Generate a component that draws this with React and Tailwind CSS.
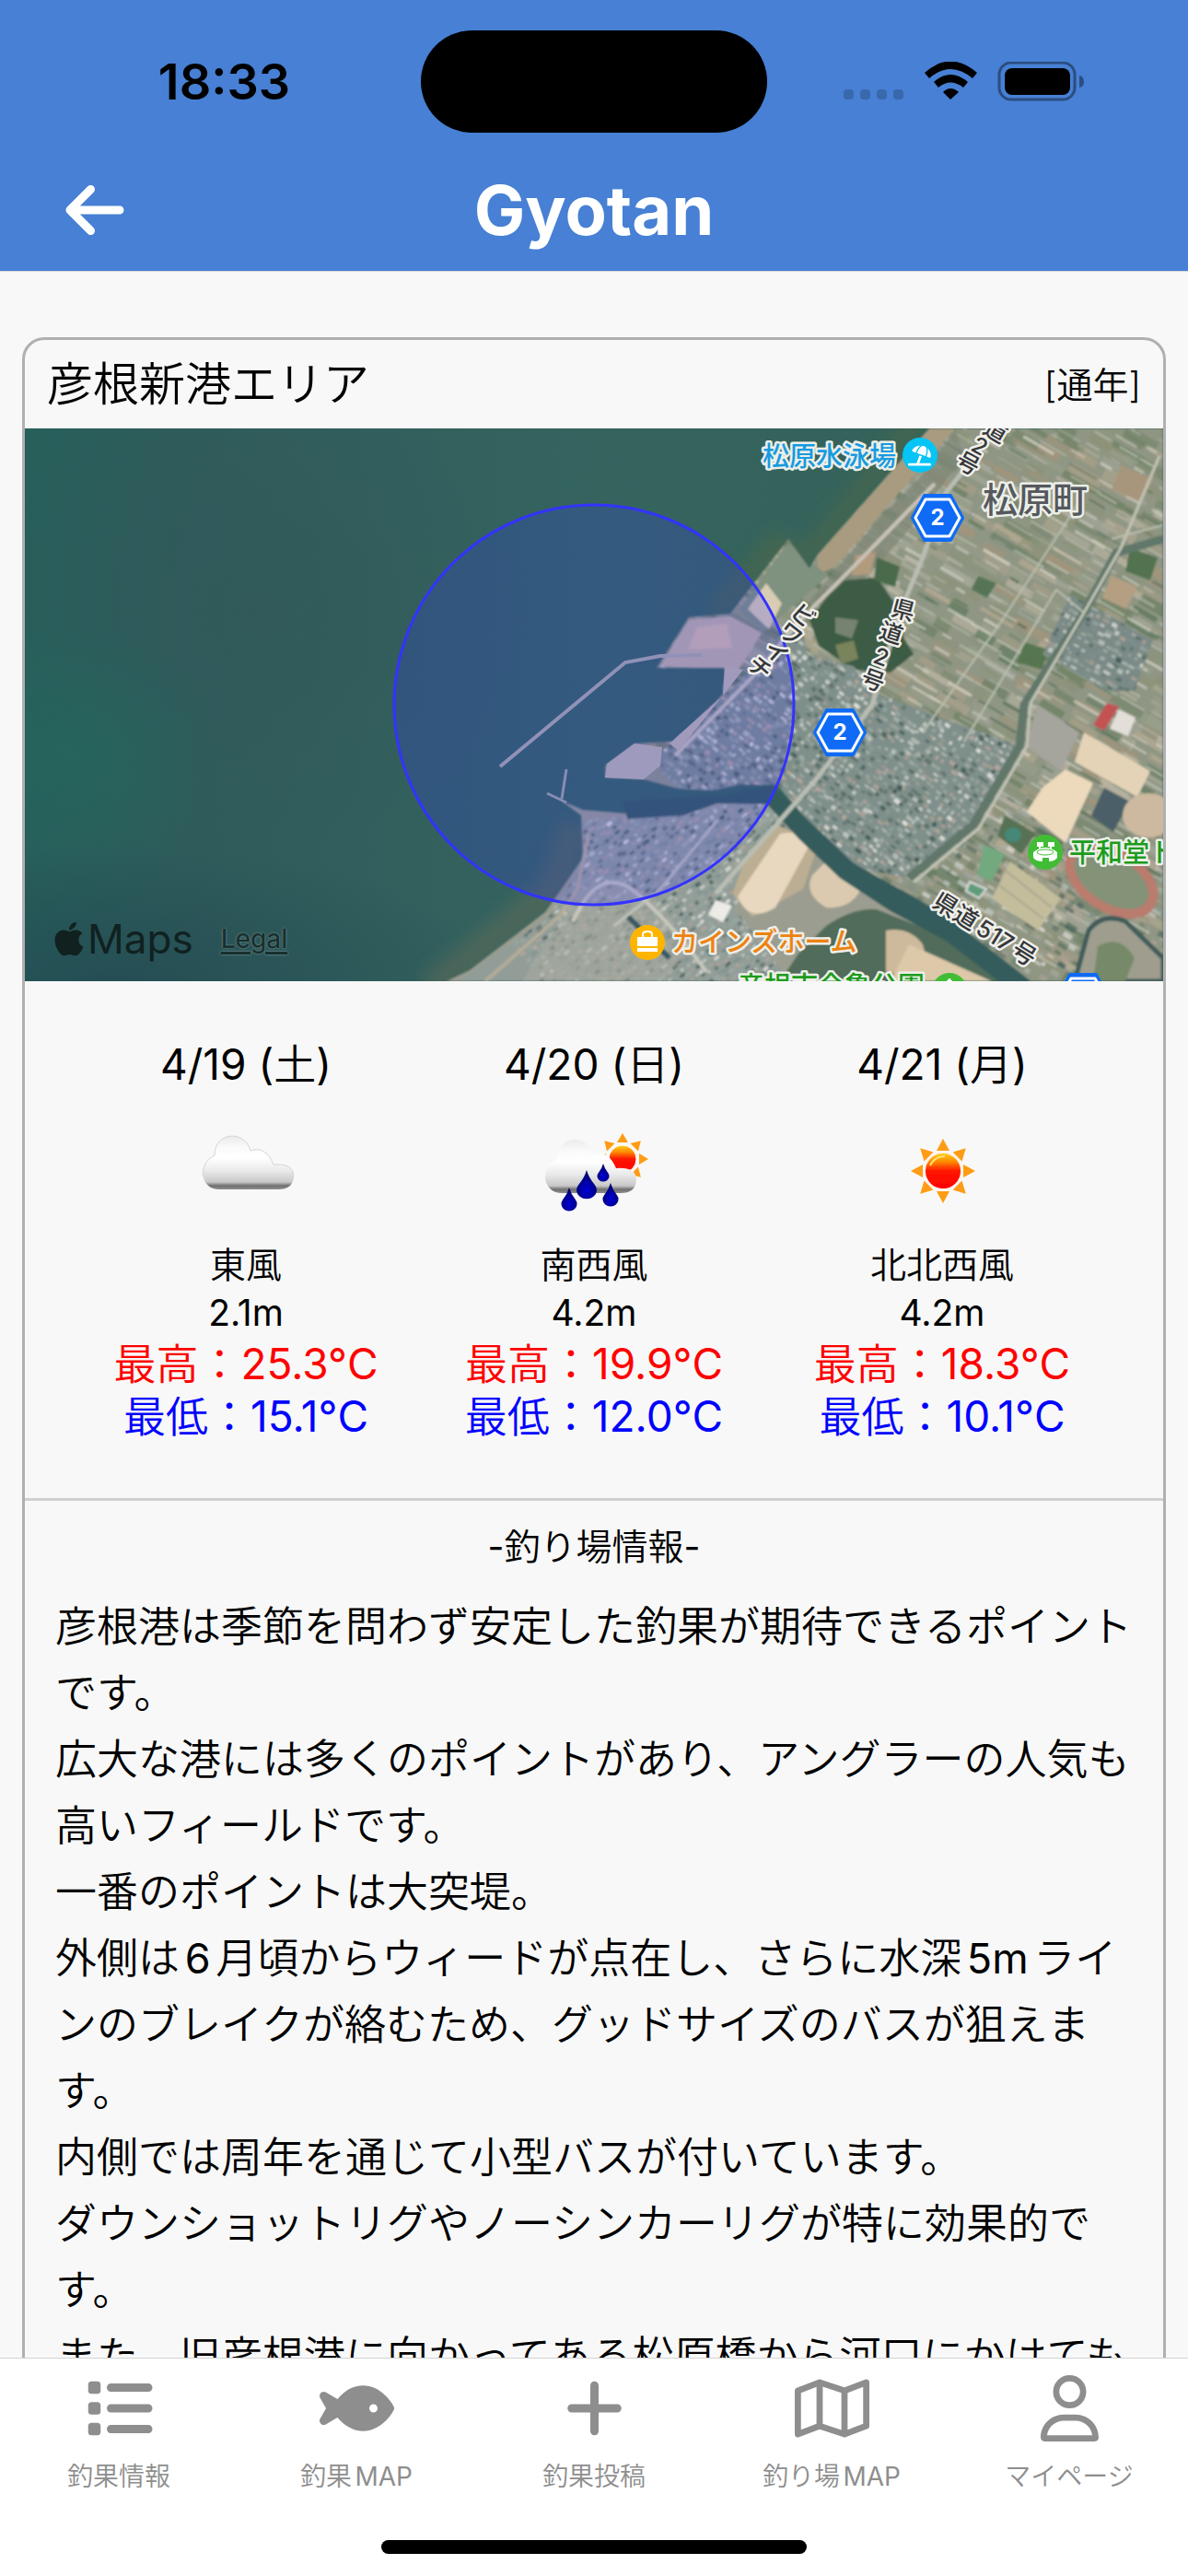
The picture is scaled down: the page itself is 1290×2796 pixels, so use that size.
import React from "react";
import { FaArrowLeft, FaList, FaFish, FaPlus, FaRegMap, FaRegUser, FaApple, FaUmbrellaBeach, FaTree } from "react-icons/fa6";

/* ---------- small deterministic generator for the aerial texture ---------- */
function rng(seed) {
  let s = seed;
  return () => {
    s = (s * 1664525 + 1013904223) % 4294967296;
    return s / 4294967296;
  };
}

function makeTiles({ seed, x, y, w, h, stepX, stepY, minW, maxW, minH, maxH, colors, opacity }) {
  const r = rng(seed);
  const out = [];
  for (let b = y; b < y + h; b += stepY) {
    for (let a = x; a < x + w; a += stepX) {
      out.push({
        x: Math.round(a + r() * stepX * 0.5),
        y: Math.round(b + r() * stepY * 0.5),
        w: Math.round(minW + r() * (maxW - minW)),
        h: Math.round(minH + r() * (maxH - minH)),
        c: colors[Math.floor(r() * colors.length)],
        o: opacity * (0.5 + r() * 0.5),
      });
    }
  }
  return out;
}

const FIELDS = makeTiles({
  seed: 7, x: 700, y: -500, w: 900, h: 920, stepX: 34, stepY: 11, minW: 16, maxW: 46, minH: 4, maxH: 12,
  colors: ["#a89f87", "#8d9277", "#6d8062", "#b8ab93", "#9aa08b", "#5e785c", "#c0b8a5", "#8a9279", "#a4947a", "#a9ac9e"], opacity: 0.8,
});
const FIELD_LINES = makeTiles({
  seed: 19, x: 700, y: -500, w: 900, h: 920, stepX: 34, stepY: 13, minW: 10, maxW: 38, minH: 1, maxH: 3,
  colors: ["#dcdccf", "#c9cdbf", "#e4dfd2", "#4d6853", "#d0d2c8"], opacity: 0.75,
});
const TOWN_COLORS = ["#c7cdc8", "#52655f", "#9aa8a3", "#e2e1da", "#7d918f", "#3f5a54", "#a9b1a8", "#b8a79c"];
const NORTH_BLOCKS = makeTiles({
  seed: 31, x: 630, y: 130, w: 480, h: 420, stepX: 7, stepY: 7, minW: 3, maxW: 7, minH: 2, maxH: 5, colors: TOWN_COLORS, opacity: 1,
});
const SOUTH_BLOCKS = makeTiles({
  seed: 43, x: 520, y: 340, w: 340, h: 320, stepX: 7, stepY: 7, minW: 3, maxW: 7, minH: 2, maxH: 4, colors: TOWN_COLORS, opacity: 1,
});
const EAST_BLOCKS = makeTiles({
  seed: 57, x: 1080, y: 130, w: 200, h: 200, stepX: 8, stepY: 8, minW: 3, maxW: 8, minH: 2, maxH: 5, colors: TOWN_COLORS, opacity: 0.9,
});
const SUBURB = makeTiles({
  seed: 71, x: 800, y: 400, w: 460, h: 240, stepX: 14, stepY: 11, minW: 4, maxW: 13, minH: 3, maxH: 7, colors: [...TOWN_COLORS, "#55705a", "#6c8268"], opacity: 0.75,
});

function Tiles({ data }) {
  return data.map((t, i) => <rect key={i} x={t.x} y={t.y} width={t.w} height={t.h} fill={t.c} opacity={t.o} />);
}

const NORTH_LAND =
  "M982 0 L860 138 L852 152 L829 120 L766 201 L721 205 L686 260 L760 260 L758 289 L705 340 L662 342 L630 366 L630 379 L672 381 L709 391 L745 393 L776 387 L817 387 L850 425 L905 478 L960 505 L1010 535 L1085 600 L1236 600 L1236 0 Z";
const SOUTH_LAND =
  "M458 600 L483 588 L565 525 L582 501 L606 466 L604 420 L582 404 L606 414 L654 418 L715 414 L752 399 L809 399 L842 440 L890 488 L945 522 L1000 552 L1060 600 Z";
const NORTH_TOWN =
  "M758 290 L790 262 L840 200 L850 245 L900 258 L930 290 L1080 345 L1030 430 L960 488 L905 478 L850 425 L817 387 L776 387 L745 393 L709 391 L690 372 L690 352 Z";
const SOUTH_TOWN = "M606 425 L715 416 L809 400 L830 440 L770 520 L830 600 L470 600 L570 528 L608 470 Z";
const EAST_TOWN = "M1135 180 L1225 230 L1205 285 L1175 285 L1105 245 Z";

function Hexagon({ cx, cy }) {
  return (
    <g transform={`translate(${cx} ${cy})`}>
      <path d="M-14 -24 H14 L27 0 L14 24 H-14 L-27 0 Z" fill="#0f6bf6" stroke="#0f6bf6" strokeWidth="4" strokeLinejoin="round" />
      <path d="M-13 -20 H13 L24 0 L13 20 H-13 L-24 0 Z" fill="#0f6bf6" stroke="#fff" strokeWidth="3" strokeLinejoin="round" />
      <text y="8" textAnchor="middle" fontSize="24" fontWeight="700" fill="#fff">2</text>
    </g>
  );
}

function RoadChars({ chars, size = 25 }) {
  return chars.map(([c, x, y, r]) => (
    <text key={c + x} transform={`translate(${x} ${y}) rotate(${r})`} y={size * 0.36} textAnchor="middle" fontSize={size} fontWeight="500" fill="#35383a" stroke="#f1f0ec" strokeWidth="5" strokeLinejoin="round" paintOrder="stroke">
      {c}
    </text>
  ));
}

function Label({ x, y, size, fill, weight = 500, children }) {
  return (
    <text x={x} y={y} fontSize={size} fontWeight={weight} fill={fill} stroke="#ecefe9" strokeWidth="5" strokeLinejoin="round" paintOrder="stroke">
      {children}
    </text>
  );
}

function AerialMap() {
  return (
    <svg viewBox="0 0 1236 600" preserveAspectRatio="xMidYMid slice" className="block h-full w-full font-['Inter','Noto_Sans_CJK_JP',sans-serif]" role="img" aria-label="彦根新港エリアの地図">
      <defs>
        <linearGradient id="sea" x1="0" y1="0" x2="1" y2="0">
          <stop offset="0" stopColor="#275f5b" />
          <stop offset="0.15" stopColor="#2f5c5b" />
          <stop offset="0.5" stopColor="#35645f" />
          <stop offset="0.85" stopColor="#356259" />
        </linearGradient>
        <radialGradient id="deep">
          <stop offset="0" stopColor="#234a52" stopOpacity="0.8" />
          <stop offset="1" stopColor="#234a52" stopOpacity="0" />
        </radialGradient>
        <radialGradient id="teal">
          <stop offset="0" stopColor="#23685f" stopOpacity="0.6" />
          <stop offset="1" stopColor="#23685f" stopOpacity="0" />
        </radialGradient>
        <radialGradient id="slate">
          <stop offset="0" stopColor="#32575a" stopOpacity="0.6" />
          <stop offset="1" stopColor="#32575a" stopOpacity="0" />
        </radialGradient>
        <clipPath id="north"><path d={NORTH_LAND} /></clipPath>
        <clipPath id="northTown"><path d={NORTH_TOWN} /></clipPath>
        <clipPath id="southTown"><path d={SOUTH_TOWN} /></clipPath>
        <clipPath id="eastTown"><path d={EAST_TOWN} /></clipPath>
        <filter id="soft"><feGaussianBlur stdDeviation="0.8" /></filter>
        <filter id="shore"><feGaussianBlur stdDeviation="9" /></filter>
      </defs>

      <rect width="1236" height="600" fill="url(#sea)" />
      <ellipse cx="250" cy="200" rx="300" ry="260" fill="url(#slate)" />
      <ellipse cx="50" cy="350" rx="170" ry="140" fill="url(#teal)" />
      <ellipse cx="90" cy="600" rx="420" ry="150" fill="url(#deep)" />
      <path d="M970 -10 L850 140 L815 125 L750 200" fill="none" stroke="#456650" strokeWidth="20" filter="url(#shore)" />
      <path d="M600 430 L575 500 L440 610" fill="none" stroke="#55695a" strokeWidth="34" opacity="0.7" filter="url(#shore)" />

      <g filter="url(#soft)">
        <path d={NORTH_LAND} fill="#8f9684" />
        <path d={SOUTH_LAND} fill="#9b9d90" />
        <g clipPath="url(#north)">
          <g transform="rotate(30 900 150)">
            <Tiles data={FIELDS} />
            <Tiles data={FIELD_LINES} />
          </g>
          <g transform="rotate(32 1040 500)"><Tiles data={SUBURB} /></g>
          <path d="M982 0 L860 138 L862 158 L880 150 L1010 0 Z" fill="#a89b80" />
          <path d="M1010 0 L985 40 L930 95 L850 190 L880 200 L960 110 L1020 30 Z" fill="#7c8575" opacity="0.7" />
          <path d="M829 124 L776 196 L800 222 L872 160 Z" fill="#7f917f" />
          <path d="M805 168 L785 196 L808 218 L822 190 Z" fill="#d9ccb4" />
          <path d="M721 208 L766 204 L800 222 L775 262 L690 258 Z" fill="#bfb0a6" />
          <path d="M730 216 L762 212 L768 238 L720 240 Z" fill="#d2b8aa" />
          <path d="M890 165 L925 162 L945 190 L950 220 L965 245 L940 265 L900 262 L862 236 L852 208 L872 182 Z" fill="#3d5c45" />
          <path d="M880 205 L905 208 L898 228 L880 222 Z" fill="#76836f" />
          <path d="M880 235 L900 230 L905 250 L886 256 Z" fill="#79835c" />
          <path d="M925 140 L950 150 L945 172 L922 165 Z" fill="#4a6a4c" />
          <path d="M902 138 L924 134 L918 158 L898 160 Z" fill="#b29a7c" />
          <path d="M1035 160 L1055 168 L1045 184 L1028 175 Z" fill="#557556" />
          <path d="M1200 130 L1230 140 L1222 165 L1195 155 Z" fill="#52724f" />
          <path d="M1180 160 L1208 172 L1196 196 L1170 184 Z" fill="#b59f83" />
          <path d="M1085 232 L1112 240 L1104 262 L1078 254 Z" fill="#56764f" />
          <path d="M1190 40 L1225 55 L1212 80 L1180 66 Z" fill="#a8967c" />
        </g>
        <g clipPath="url(#northTown)">
          <path d={NORTH_TOWN} fill="#7f8f8a" />
          <g transform="rotate(38 870 340)"><Tiles data={NORTH_BLOCKS} /></g>
        </g>
        <g clipPath="url(#eastTown)">
          <path d={EAST_TOWN} fill="#7a8a86" />
          <g transform="rotate(28 1180 230)"><Tiles data={EAST_BLOCKS} /></g>
        </g>
        <path d="M1100 300 L1145 330 L1125 372 L1086 345 Z" fill="#a5a49d" />
        <path d="M1150 330 L1222 372 L1208 400 L1140 362 Z" fill="#e5d3b7" />
        <path d="M1175 298 L1188 302 L1172 328 L1160 322 Z" fill="#c35352" />
        <path d="M1188 305 L1206 314 L1198 334 L1178 326 Z" fill="#e3dfd8" />
        <path d="M1130 370 L1160 385 L1130 450 L1088 416 L1105 390 Z" fill="#eddabd" />
        <path d="M1172 390 L1200 405 L1182 438 L1158 420 Z" fill="#4c5f68" />
        <ellipse cx="1220" cy="420" rx="28" ry="24" fill="#ccb99f" />
        <path d="M1064 420 L1098 440 L1082 462 L1056 442 Z" fill="#567153" />
        <ellipse cx="1073" cy="441" rx="9" ry="8" fill="#458878" />
        <path d="M1042 452 L1064 462 L1050 492 L1034 484 Z" fill="#72a97f" />
        <path d="M1026 492 L1044 500 L1036 510 L1022 502 Z" fill="#5f9c7c" stroke="#ddd" strokeWidth="2" />
        <path d="M1070 470 L1125 510 L1100 545 L1050 510 Z" fill="#c3bd9c" />
        <path d="M1065 480 L1115 520 M1058 496 L1106 532" stroke="#aaa78f" strokeWidth="2" />
        <ellipse cx="1180" cy="490" rx="50" ry="30" transform="rotate(32 1180 490)" fill="#849278" stroke="#b97c6d" strokeWidth="10" />
        <path d="M1155 545 Q1170 525 1195 535 L1236 575 L1236 600 L1140 600 Z" fill="#9f9e8e" stroke="#3f5c5a" strokeWidth="5" />
        <path d="M1165 562 Q1190 548 1205 575 L1195 600 L1160 600 Z" fill="#768a6b" />

        <g clipPath="url(#southTown)">
          <path d={SOUTH_TOWN} fill="#929d98" />
          <g transform="rotate(-38 690 490)"><Tiles data={SOUTH_BLOCKS} /></g>
        </g>
        <path d="M598 505 Q640 475 690 520 L728 560 L690 600 L540 600 Z" fill="#a8aaa0" opacity="0.6" />
        <path d="M595 535 Q625 470 665 505 T740 590" fill="none" stroke="#c8c8be" strokeWidth="4" />
        <path d="M752 425 L690 500 L640 540" fill="none" stroke="#bfc2b8" strokeWidth="3" />
        <path d="M500 600 L580 530 L600 500 L612 440" fill="none" stroke="#b3ac98" strokeWidth="4" />
        <path d="M816 430 L862 450 L845 500 L790 530 L768 505 L785 460 Z" fill="#bcae92" />
        <path d="M820 440 Q846 434 850 456 L815 520 Q786 538 774 508 Z" fill="#e8d8bf" />
        <path d="M870 470 Q905 462 910 495 Q900 522 870 520 Q845 505 855 485 Z" fill="#dccab0" />
        <path d="M750 512 L768 518 L758 536 L742 528 Z" fill="#ecebe6" />
        <path d="M870 540 Q900 520 925 522 L1000 552 L1060 600 L820 600 L840 570 Z" fill="#516c5a" />
        <path d="M935 545 Q960 540 975 560 L985 600 L935 590 Z" fill="#cdb99c" />
        <path d="M960 560 L1050 600 L940 600 Z" fill="#ddc8a9" />
        <path d="M655 530 L700 575" stroke="#3b5963" strokeWidth="6" />

        <path d="M650 405 L760 398 L812 388 L845 420 L900 472 L960 506 L1010 536 L1095 602 L1060 602 L1000 556 L940 524 L885 488 L840 445 L806 408 L752 407 L715 420 L654 424 Z" fill="#365c5b" />
        <path d="M1236 120 L1185 135 L1150 200 L1085 300 L1080 345 L1030 430 L960 488" fill="none" stroke="#61776a" strokeWidth="9" />
        <path d="M1232 30 L1190 130 L1150 200 L1092 298 L1088 345 L1036 434 L966 492" fill="none" stroke="#c2c4b6" strokeWidth="3" />
        <path d="M1055 0 L1000 70 L975 140 L950 200 L920 300 L860 380 L750 505" fill="none" stroke="#b9bdb2" strokeWidth="5" />
        <path d="M988 60 L900 150 L840 210 L790 270 L706 355" fill="none" stroke="#c9c3b8" strokeWidth="4" />
        <path d="M1150 200 L1120 175 L1020 340 M1180 120 L1236 105 M1145 80 L1060 210 L975 330" fill="none" stroke="#babfae" strokeWidth="2" />
      </g>

      <path d="M516 367 L652 254 L690 247 L735 246" fill="none" stroke="#a9a9a6" strokeWidth="4" />
      <path d="M588 370 L583 402 M567 396 L588 406" fill="none" stroke="#9fa3a2" strokeWidth="3" />
      <path d="M630 379 L632 364 L662 342 L692 346 L690 366 L672 381 Z" fill="#b9b4ad" />
      <path d="M760 258 L780 262 L710 350 L700 342 L758 290 Z" fill="#bdb4ad" />

      <circle cx="618" cy="300" r="217" fill="#3333ff" fillOpacity="0.2" stroke="#3333ff" strokeWidth="3" />

      <RoadChars chars={[["道", 1054, 3, 30], ["2", 1037, 19, 30], ["号", 1024, 38, 28]]} />
      <RoadChars chars={[["県", 954, 197, 15], ["道", 941, 222, 18], ["2", 930, 248, 20], ["号", 921, 273, 20]]} />
      <RoadChars chars={[["ビ", 845, 203, 42], ["ワ", 832, 223, 38], ["イ", 816, 243, 42], ["チ", 798, 260, 42]]} />
      <text transform="translate(984 518) rotate(32)" fontSize="26" fontWeight="500" fill="#35383a" stroke="#f1f0ec" strokeWidth="5" strokeLinejoin="round" paintOrder="stroke">県道517号</text>

      <Label x={801} y={41} size={29} fill="#189be0">松原水泳場</Label>
      <circle cx="972" cy="29" r="19" fill="#06c4f6" />
      <FaUmbrellaBeach x="959" y="17" size="25" color="#fff" />
      <Label x={1040} y={91} size={38} fill="#55595d">松原町</Label>
      <Hexagon cx={991} cy={97} />
      <Hexagon cx={885} cy={330} />
      <Hexagon cx={1149} cy={617} />
      <circle cx="1108" cy="460" r="19" fill="#41bd35" />
      <g fill="#fff">
        <rect x="1099" y="449" width="7" height="5" />
        <rect x="1111" y="449" width="7" height="5" />
        <rect x="1101" y="453" width="2" height="4" />
        <rect x="1113" y="453" width="2" height="4" />
        <path d="M1095 460 Q1108 450 1121 460 V466 Q1118 470 1112 470 V466 H1105 V470 Q1098 470 1095 466 Z" />
        <ellipse cx="1108" cy="460" rx="9" ry="3" fill="none" stroke="#41bd35" strokeWidth="1" />
      </g>
      <Label x={1134} y={471} size={29} fill="#1c9c1c">平和堂ト</Label>
      <circle cx="676" cy="558" r="19" fill="#ffb500" />
      <g fill="#fff">
        <path d="M665 552 H687 V562 H665 Z M665 564 H687 V568 H665 Z" />
        <path d="M671 552 V549 Q671 546 676 546 Q681 546 681 549 V552" fill="none" stroke="#fff" strokeWidth="2" />
      </g>
      <Label x={702} y={568} size={29} fill="#ee8210">カインズホーム</Label>
      <Label x={774} y={616} size={29} fill="#1c9c1c">彦根市金亀公園</Label>
      <circle cx="1004" cy="610" r="19" fill="#41bd35" />
      <FaTree x="992" y="597" size="24" color="#fff" />
    </svg>
  );
}

/* ------------------------------ weather icons ----------------------------- */
function sunRays(cx, cy, inner, outer, half) {
  return Array.from({ length: 8 }, (_, i) => (
    <path key={i} transform={`translate(${cx} ${cy}) rotate(${i * 45})`} d={`M${-half} ${-inner} L0 ${-outer} L${half} ${-inner} Z`} fill="#ff9c12" />
  ));
}

function WeatherGradients({ id }) {
  return (
    <defs>
      <linearGradient id={id + "sun"} x1="0" y1="0" x2="0" y2="1">
        <stop offset="0" stopColor="#ffd21e" />
        <stop offset="0.25" stopColor="#ff8a00" />
        <stop offset="0.5" stopColor="#ff1500" />
        <stop offset="1" stopColor="#ff0000" />
      </linearGradient>
      <linearGradient id={id + "cloud"} x1="0" y1="34" x2="0" y2="91" gradientUnits="userSpaceOnUse">
        <stop offset="0" stopColor="#ececec" />
        <stop offset="0.2" stopColor="#fafafa" />
        <stop offset="0.4" stopColor="#ffffff" />
        <stop offset="0.65" stopColor="#e9e9e9" />
        <stop offset="0.86" stopColor="#c8c8c8" />
        <stop offset="0.93" stopColor="#6f6f6f" />
        <stop offset="1" stopColor="#8f8f8f" />
      </linearGradient>
      <radialGradient id={id + "drop"} cx="0.5" cy="0.7" r="0.6">
        <stop offset="0" stopColor="#0000d8" />
        <stop offset="1" stopColor="#00006c" />
      </radialGradient>
      <filter id={id + "blur"} x="-10%" y="-10%" width="120%" height="120%"><feGaussianBlur stdDeviation="0.7" /></filter>
    </defs>
  );
}

const CLOUD_TOP = "M40 76 Q40 60 53 54 C53 28 86 26 92 49 Q108 43 117 64 Q139 62 139 77";
const CLOUD = CLOUD_TOP + " Q138 91 122 91 L58 91 Q44 91 40 76 Z";

function Cloudy() {
  return (
    <svg viewBox="0 0 150 150" className="size-[150px]" role="img" aria-label="くもり">
      <WeatherGradients id="a" />
      <g transform="translate(-12 3)" filter="url(#ablur)">
        <path d={CLOUD} fill="url(#acloud)" />
        <path d={CLOUD_TOP} fill="none" stroke="#d4d4d4" strokeWidth="1" />
      </g>
    </svg>
  );
}

function Drop({ x, y, w, h }) {
  return <path transform={`translate(${x} ${y})`} d={`M0 0 Q${w * 0.1} ${h * 0.25} ${w * 0.4} ${h * 0.5} A${w / 2} ${h * 0.3} 0 1 1 ${-w * 0.4} ${h * 0.5} Q${-w * 0.1} ${h * 0.25} 0 0 Z`} fill="url(#bdrop)" />;
}

function RainThenSun() {
  return (
    <svg viewBox="0 0 150 150" className="size-[150px]" role="img" aria-label="雨のち晴れ">
      <WeatherGradients id="b" />
      <g filter="url(#bblur)">
        {sunRays(106, 61, 18, 28, 6)}
        <circle cx="106" cy="61" r="15" fill="url(#bsun)" stroke="#fff" strokeWidth="1" />
        <g transform="translate(-18 7)">
          <path d={CLOUD} fill="url(#bcloud)" />
        </g>
        <Drop x={67} y={73} w={22} h={32} />
        <Drop x={85} y={66} w={13} h={20} />
        <Drop x={48} y={92} w={17} h={26} />
        <Drop x={93} y={87} w={17} h={26} />
      </g>
    </svg>
  );
}

function Sunny() {
  return (
    <svg viewBox="0 0 150 150" className="size-[150px]" role="img" aria-label="晴れ">
      <WeatherGradients id="c" />
      <g filter="url(#cblur)">
        {sunRays(76, 74, 22, 35, 7)}
        <circle cx="76" cy="74" r="20" fill="url(#csun)" stroke="#fff2e8" strokeWidth="2" />
        <path d="M62 68 Q67 58 78 58" fill="none" stroke="#ffe070" strokeWidth="2" />
      </g>
    </svg>
  );
}

/* --------------------------------- screen --------------------------------- */
function StatusBar() {
  return (
    <div className="grid h-[177px] grid-cols-[1fr_376px_1fr] items-center">
      <div className="pl-[30px] text-center text-[54px] leading-none font-semibold text-black">18:33</div>
      <div className="h-[111px] rounded-full bg-black" />
      <div className="flex items-center justify-end pr-[112px]">
        <svg viewBox="0 0 262 44" className="h-[44px] w-[262px]" role="img" aria-label="Wi-Fi、バッテリー">
          <g fill="#3969ad">
            <rect x="0" y="30" width="11" height="11" rx="4" />
            <rect x="18" y="30" width="11" height="11" rx="4" />
            <rect x="36" y="30" width="11" height="11" rx="4" />
            <rect x="54" y="30" width="11" height="11" rx="4" />
          </g>
          <path d="M88 12 Q116 -13 145 12 L140 18 Q116 -2 93 18 Z" fill="#000" />
          <path d="M98 22 Q116 6 135 22 L130 28 Q116 17 103 28 Z" fill="#000" />
          <path d="M108 33 Q116 25 125 33 L116 41 Z" fill="#000" />
          <rect x="169" y="1" width="82" height="40" rx="13" fill="none" stroke="#2b4d80" strokeWidth="3" />
          <rect x="175" y="7" width="71" height="29" rx="8" fill="#000" />
          <path d="M256 15 Q261 16 261 22 Q261 27 256 28 Z" fill="#2b4d80" />
        </svg>
      </div>
    </div>
  );
}

const FORECAST = [
  { date: "4/19 (土)", Icon: Cloudy, wind: "東風", speed: "2.1m", high: "25.3", low: "15.1" },
  { date: "4/20 (日)", Icon: RainThenSun, wind: "南西風", speed: "4.2m", high: "19.9", low: "12.0" },
  { date: "4/21 (月)", Icon: Sunny, wind: "北北西風", speed: "4.2m", high: "18.3", low: "10.1" },
];

const PARAGRAPHS = [
  "彦根港は季節を問わず安定した釣果が期待できるポイントです。",
  "広大な港には多くのポイントがあり、アングラーの人気も高いフィールドです。",
  "一番のポイントは大突堤。",
  "外側は6月頃からウィードが点在し、さらに水深5mラインのブレイクが絡むため、グッドサイズのバスが狙えます。",
  "内側では周年を通じて小型バスが付いています。",
  "ダウンショットリグやノーシンカーリグが特に効果的です。",
  "また、旧彦根港に向かってある松原橋から河口にかけても",
];

const TABS = [
  { label: "釣果情報", Icon: FaList },
  { label: "釣果MAP", Icon: FaFish },
  { label: "釣果投稿", Icon: FaPlus },
  { label: "釣り場MAP", Icon: FaRegMap },
  { label: "マイページ", Icon: FaRegUser },
];

/* Japanese runs are set light, Latin letters and digits at regular weight. */
function Mixed({ text }) {
  return text.split(/([\x21-\x7e°]+)/).map((part, i) =>
    i % 2 ? <span key={i} className="font-normal">{part}</span> : part
  );
}

export default function App() {
  return (
    <div lang="ja" className="flex h-screen flex-col bg-[#f8f8f8] font-['Inter','Noto_Sans_CJK_JP',sans-serif] font-[350] text-black [text-autospace:normal]">
      <header className="shrink-0 border-b border-[#d8d8d8] bg-[#4780d4] pb-[15px]">
        <StatusBar />
        <div className="grid h-[102px] grid-cols-[1fr_auto_1fr] items-center px-[67px]">
          <button type="button" aria-label="戻る" className="justify-self-start text-white">
            <FaArrowLeft className="size-[72px]" />
          </button>
          <h1 className="text-[74px] leading-none font-bold text-white">Gyotan</h1>
        </div>
      </header>

      <main className="min-h-0 flex-1 overflow-y-auto px-6 pt-[71px] [scrollbar-width:none]">
        <article className="overflow-hidden rounded-[24px] border-[3px] border-[#b0b0b0]">
          <div className="flex h-24 items-center justify-between px-6">
            <h2 className="text-[50px] leading-none font-[350]">彦根新港エリア</h2>
            <span className="text-[39px] leading-none">[通年]</span>
          </div>

          <div className="relative h-[600px]">
            <AerialMap />
            <div className="absolute bottom-6 left-8 flex items-center gap-[30px] text-[#10211f]">
              <span className="flex items-center gap-1 text-[44px] leading-none font-normal">
                <FaApple className="h-[42px] w-8" />
                Maps
              </span>
              <a href="#legal" className="text-[28px] leading-none font-medium text-[#17302e] underline decoration-[3px] underline-offset-4 [text-shadow:0_0_2px_#8fa5a4]">Legal</a>
            </div>
          </div>

          <section className="grid grid-cols-3 border-b-[3px] border-[#d0d0d0] px-[51px] py-[60px] text-center">
            {FORECAST.map(({ date, Icon, wind, speed, high, low }) => (
              <div key={date} className="flex flex-col items-center">
                <h3 className="text-[46px] leading-[60px] font-[350]"><Mixed text={date} /></h3>
                <div className="mt-3"><Icon /></div>
                <p className="text-[39px] leading-[51px]">{wind}</p>
                <p className="text-[39px] leading-[54px] font-normal">{speed}</p>
                <p className="text-[46px] leading-[57px] text-[#ff0000]"><Mixed text={`最高：${high}°C`} /></p>
                <p className="text-[46px] leading-[57px] text-[#0000ff]"><Mixed text={`最低：${low}°C`} /></p>
              </div>
            ))}
          </section>

          <section className="px-[33px] pt-6">
            <h3 className="text-center text-[39px] leading-[51px] font-[350]"><Mixed text="-釣り場情報-" /></h3>
            <div className="pt-[26px] text-[45px] leading-[72px]">
              {PARAGRAPHS.map((p) => (
                <p key={p}><Mixed text={p} /></p>
              ))}
            </div>
          </section>
        </article>
      </main>

      <footer className="shrink-0 border-t border-[#d4d4d4] bg-white">
        <nav className="grid grid-cols-5 pt-[18px] text-[#8e8e8e]">
          {TABS.map(({ label, Icon }) => (
            <button key={label} type="button" className="flex flex-col items-center gap-[18px]">
              <Icon className="h-[72px] w-[81px]" />
              <span className="text-[28px] leading-10"><Mixed text={label} /></span>
            </button>
          ))}
        </nav>
        <div className="flex justify-center pt-[49px] pb-6">
          <div className="h-[15px] w-[462px] rounded-full bg-black" />
        </div>
      </footer>
    </div>
  );
}
